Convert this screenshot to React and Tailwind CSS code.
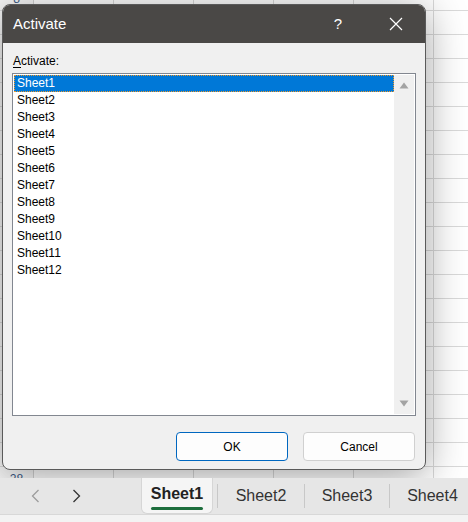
const sheets = Array.from({ length: 12 }, (_, i) => `Sheet${i + 1}`);
const rows = Array.from({ length: 21 }, (_, i) => i + 8);

function Grid() {
  return (
    <div className="mt-[-13px] flex flex-col">
      {rows.map((n) => (
        <div key={n} className="flex h-[24px] shrink-0 border-b border-[#dadada]">
          <div className="flex w-[34px] shrink-0 items-center justify-center border-r border-[#d4d4d4] bg-[#f7f7f7] text-[12px] text-[#3b5a86]">
            {n === 8 || n === 28 ? n : ''}
          </div>
          {[0, 1, 2, 3, 4, 5].map((c) => (
            <div key={c} className="w-[80px] shrink-0 border-r border-[#dadada]" />
          ))}
        </div>
      ))}
    </div>
  );
}

function Dialog() {
  return (
    <div className="absolute left-[2px] top-[4px] flex h-[466px] w-[424px] flex-col overflow-hidden rounded-[8px] border border-[#5a5a5a] bg-[#f0f0f0] shadow-[0_6px_40px_rgba(0,0,0,0.38)]">
      <div className="flex h-[38px] shrink-0 items-center bg-[#4a4846] pl-[10px] pr-[6px] text-white">
        <span className="flex-1 text-[15px]">Activate</span>
        <span className="flex w-[46px] justify-center text-[15px]">?</span>
        <span className="w-[12px]" />
        <span className="flex w-[46px] justify-center">
          <svg width="14" height="14" viewBox="0 0 14 14">
            <path d="M1 1 L13 13 M13 1 L1 13" stroke="#ffffff" strokeWidth="1.2" fill="none" />
          </svg>
        </span>
      </div>

      <div className="flex flex-1 flex-col px-[9px] pt-[11px] text-[12px] text-black">
        <p className="ml-[1px] leading-[15px]">
          <span className="underline underline-offset-2">A</span>ctivate:
        </p>

        <div className="mt-[4px] flex h-[343px] border border-[#828790] bg-white p-[1px]">
          <ul className="flex-1">
            {sheets.map((s, i) => (
              <li
                key={s}
                className={
                  i === 0
                    ? 'h-[17px] border border-dotted border-[#f09a2a] bg-[#0078d7] pl-[2px] leading-[15px] text-white'
                    : 'h-[17px] pl-[3px] leading-[17px]'
                }
              >
                {s}
              </li>
            ))}
          </ul>
          <div className="flex w-[20px] flex-col items-center justify-between bg-[#f0f0f0] pb-[7px] pt-[7px]">
            <svg width="10" height="7" viewBox="0 0 10 7">
              <path d="M5 0.5 L9.5 6.5 L0.5 6.5 Z" fill="#a3a3a3" />
            </svg>
            <svg width="10" height="7" viewBox="0 0 10 7">
              <path d="M0.5 0.5 L9.5 0.5 L5 6.5 Z" fill="#a3a3a3" />
            </svg>
          </div>
        </div>

        <div className="mt-[16px] flex justify-end gap-[15px] pr-[1px]">
          <button className="h-[29px] w-[112px] rounded-[4px] border border-[#0067c0] bg-[#fdfdfd] text-[12px]">
            OK
          </button>
          <button className="h-[29px] w-[112px] rounded-[4px] border border-[#d0d0d0] bg-[#fdfdfd] text-[12px]">
            Cancel
          </button>
        </div>
      </div>
    </div>
  );
}

function Chevron({ dir, color }) {
  return (
    <svg width="9" height="14" viewBox="0 0 9 14">
      <path
        d={dir === 'left' ? 'M7.5 1 L1.5 7 L7.5 13' : 'M1.5 1 L7.5 7 L1.5 13'}
        fill="none"
        stroke={color}
        strokeWidth="1.3"
      />
    </svg>
  );
}

function TabBar() {
  const others = [
    { name: 'Sheet2', w: 'w-[86px]' },
    { name: 'Sheet3', w: 'w-[84px]' },
    { name: 'Sheet4', w: 'w-[85px]' }
  ];
  return (
    <div className="flex h-[36px] shrink-0 items-stretch bg-[#e6e6e6] text-[16px] text-[#333]">
      <div className="flex w-[141px] shrink-0 items-center gap-[32px] pl-[31px]">
        <Chevron dir="left" color="#9c9c9c" />
        <Chevron dir="right" color="#333333" />
      </div>
      <div className="flex w-[72px] shrink-0 flex-col items-center justify-center rounded-b-[6px] border border-t-0 border-[#d6d6d6] bg-[#f5f5f5] font-bold text-[#222]">
        <span className="mt-[2px] leading-[20px]">Sheet1</span>
        <span className="mt-[3px] h-[3px] w-[52px] rounded-full bg-[#1d6e3d]" />
      </div>
      <div className="w-[4px] shrink-0" />
      {others.map((t) => (
        <div key={t.name} className="flex shrink-0 items-center">
          <span className="h-[24px] w-px bg-[#c8c8c8]" />
          <span className={`${t.w} text-center`}>{t.name}</span>
        </div>
      ))}
    </div>
  );
}

export default function App() {
  return (
    <div className="flex h-[522px] w-[468px] flex-col overflow-hidden bg-white font-['Liberation_Sans',Arial,sans-serif]">
      <div className="relative h-[478px] shrink-0 overflow-hidden">
        <Grid />
        <Dialog />
      </div>
      <TabBar />
      <div className="h-[8px] flex-1 border-t border-[#d8d8d8] bg-[#f3f3f3]" />
    </div>
  );
}
